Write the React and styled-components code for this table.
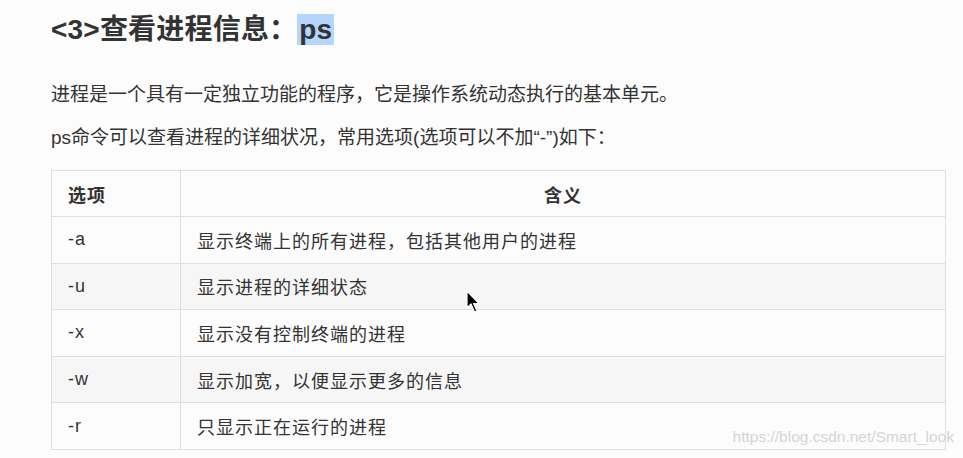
import React from "react";
import styled, { createGlobalStyle } from "styled-components";

const GlobalStyle = createGlobalStyle`
  html, body {
    margin: 0;
    padding: 0;
    background: #fcfcfc;
  }
  body {
    font-family: "Liberation Sans", "Noto Sans CJK SC", sans-serif;
    color: #333;
  }
`;

const rows = [
  { opt: "-a", desc: "显示终端上的所有进程，包括其他用户的进程" },
  { opt: "-u", desc: "显示进程的详细状态" },
  { opt: "-x", desc: "显示没有控制终端的进程" },
  { opt: "-w", desc: "显示加宽，以便显示更多的信息" },
  { opt: "-r", desc: "只显示正在运行的进程" },
];

const App = () => {
  return (
    <Page>
      <GlobalStyle />
      <Heading>
        &lt;3&gt;查看进程信息：<Mark>ps</Mark>
      </Heading>
      <Para>进程是一个具有一定独立功能的程序，它是操作系统动态执行的基本单元。</Para>
      <Para>ps命令可以查看进程的详细状况，常用选项(选项可以不加“-”)如下：</Para>
      <Table>
        <thead>
          <tr>
            <Th>选项</Th>
            <Th center>含义</Th>
          </tr>
        </thead>
        <tbody>
          {rows.map((r, i) => (
            <Tr key={r.opt} striped={i % 2 === 1}>
              <Td>{r.opt}</Td>
              <Td>{r.desc}</Td>
            </Tr>
          ))}
        </tbody>
      </Table>
      <Cursor width="16" height="24" viewBox="0 0 16 24">
        <path
          d="M1 1 L1 18 L5 14 L8.5 22 L11 21 L7.5 13.5 L13 13.5 Z"
          fill="#000"
          stroke="#fff"
          strokeWidth="1.2"
          strokeLinejoin="round"
        />
      </Cursor>
      <Watermark>https://blog.csdn.net/Smart_look</Watermark>
    </Page>
  );
};

export default App;

const Page = styled.div`
  position: relative;
  width: 963px;
  height: 458px;
  box-sizing: border-box;
  padding: 12px 17px 0 51px;
  overflow: hidden;
`;

const Heading = styled.h2`
  margin: 0 0 34px;
  font-size: 28px;
  line-height: 36px;
  font-weight: bold;
  color: #333;
  letter-spacing: 0.2px;
  font-family: "Liberation Sans", "Noto Sans CJK SC", sans-serif;
`;

const Mark = styled.span`
  background: #b4d5fe;
  padding: 0 2px;
`;

const Para = styled.p`
  margin: 0 0 17px;
  font-size: 19px;
  line-height: 26px;
  letter-spacing: 0px;
  color: #333;
`;

const Table = styled.table`
  margin-top: 19px;
  width: 895px;
  border-collapse: collapse;
  font-size: 18px;
  letter-spacing: 1px;
  color: #333;
`;

const Th = styled.th`
  height: 45px;
  padding: 0 16px;
  border: 1px solid #dfdfdf;
  font-weight: bold;
  text-align: ${(p) => (p.center ? "center" : "left")};
  &:first-child {
    width: 96px;
  }
`;

const Tr = styled.tr`
  background: ${(p) => (p.striped ? "#f6f6f6" : "#fcfcfc")};
`;

const Td = styled.td`
  height: 45.6px;
  padding: 0 16px;
  border: 1px solid #dfdfdf;
`;

const Cursor = styled.svg`
  position: absolute;
  left: 466px;
  top: 290px;
`;

const Watermark = styled.div`
  position: absolute;
  right: 9px;
  top: 428px;
  font-size: 15.5px;
  color: #d4d4d4;
`;
